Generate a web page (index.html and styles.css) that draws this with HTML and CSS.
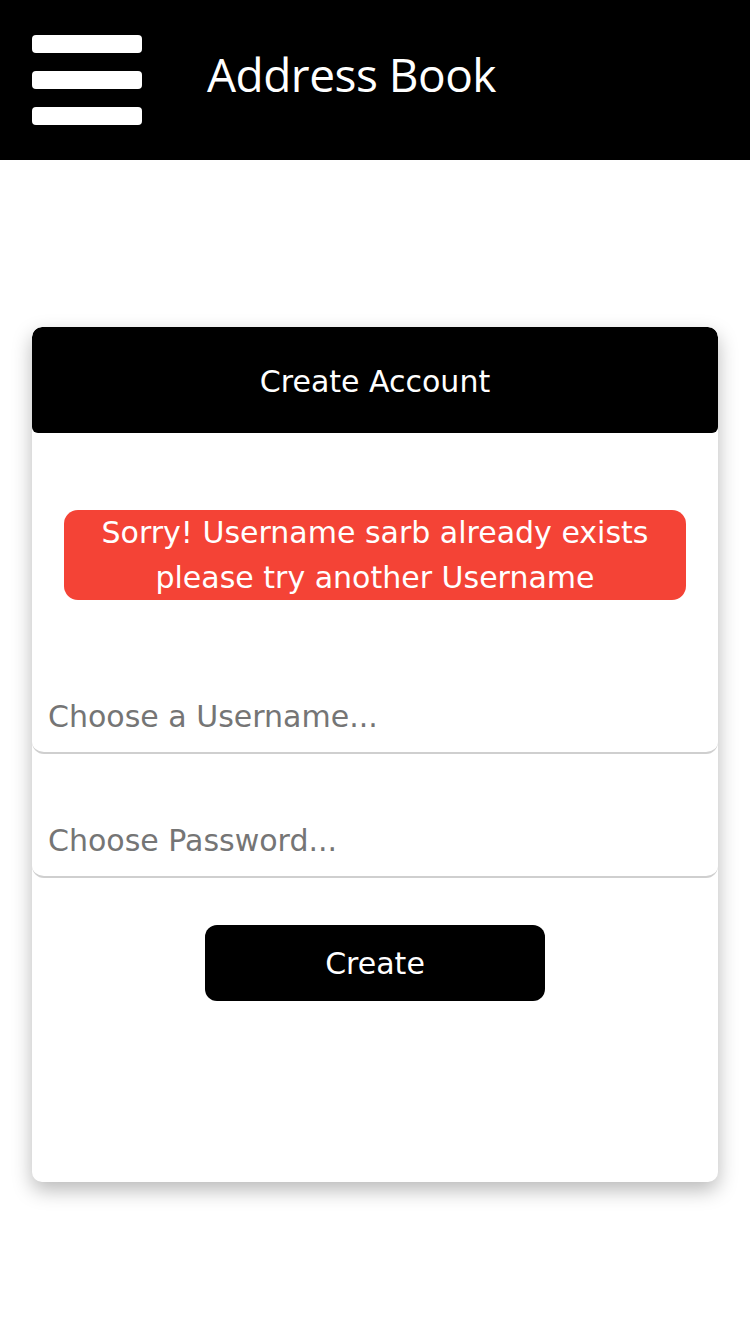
FILE: index.html
```html
<!DOCTYPE html>
<html>
<head>
<meta charset="utf-8">
<link rel="stylesheet" href="styles.css">
</head>
<body>
<header class="topbar">
  <div class="burger"><span></span><span></span><span></span></div>
  <h1 class="title">Address Book</h1>
</header>
<main class="page">
  <section class="card">
    <div class="card-head">Create Account</div>
    <div class="card-body">
      <div class="alert">Sorry! Username sarb already exists please try another Username</div>
      <input class="field field-first" type="text" placeholder="Choose a Username...">
      <input class="field" type="password" placeholder="Choose Password...">
      <button class="btn">Create</button>
    </div>
  </section>
</main>
</body>
</html>
```

FILE: styles.css
```css
* { box-sizing: border-box; }
html, body { margin: 0; padding: 0; background: #fff; }
body { font-family: "DejaVu Sans", sans-serif; width: 750px; height: 1334px; overflow: hidden; }

.topbar {
  height: 160px;
  background: #000;
  display: flex;
  align-items: center;
  padding-left: 32px;
}
.burger {
  width: 110px;
  display: flex;
  flex-direction: column;
  gap: 18px;
  margin-top: -1px;
}
.burger span {
  display: block;
  height: 18px;
  background: #fff;
  border-radius: 4px;
}
.title {
  margin: 0 0 12px 65px;
  color: #fff;
  font-family: "Open Sans", sans-serif;
  font-weight: 400;
  font-size: 46px;
  letter-spacing: -0.5px;
}

.page { padding: 167px 32px 0; }
.card {
  height: 855px;
  background: #fff;
  border-radius: 10px;
  box-shadow: 0 8px 20px rgba(0,0,0,0.28);
  overflow: hidden;
}
.card-head {
  height: 106px;
  background: #000;
  color: #fff;
  font-size: 30px;
  display: flex;
  align-items: center;
  justify-content: center;
  border-radius: 10px 10px 6px 6px;
  padding-top: 2px;
}
.card-body {
  display: flex;
  flex-direction: column;
  align-items: center;
  padding-top: 77px;
}
.alert {
  width: 622px;
  height: 90px;
  background: #f44336;
  color: #fff;
  border-radius: 14px;
  font-size: 30px;
  line-height: 45px;
  text-align: center;
  padding: 0 20px;
}
.field {
  display: block;
  width: 100%;
  height: 74px;
  border: none;
  border-bottom: 2px solid #cfcfcf;
  border-radius: 0 0 12px 12px;
  padding: 0 16px;
  font-family: "DejaVu Sans", sans-serif;
  font-size: 30px;
  color: #333;
  background: #fff;
  outline: none;
  margin-top: 50px;
}
.field-first { margin-top: 80px; }
.field::placeholder { color: #757575; }
.btn {
  margin-top: 47px;
  width: 340px;
  height: 76px;
  background: #000;
  color: #fff;
  border: none;
  border-radius: 12px;
  font-family: "DejaVu Sans", sans-serif;
  font-size: 30px;
}
```
